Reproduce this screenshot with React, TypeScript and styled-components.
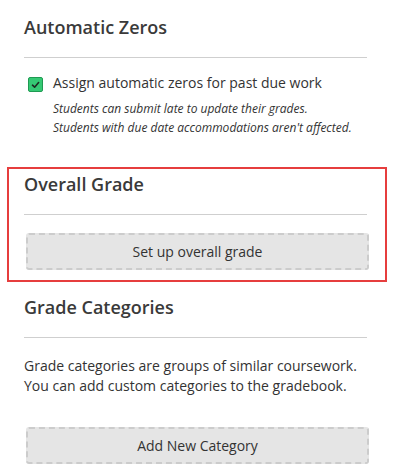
import React from "react";
import styled, { createGlobalStyle } from "styled-components";

const GlobalStyle = createGlobalStyle`
  html, body {
    margin: 0;
    padding: 0;
    background: #ffffff;
  }
  body {
    font-family: "Open Sans", "Noto Sans", Arial, sans-serif;
    color: #333333;
  }
`;

const Page = styled.div`
  width: 343px;
  padding: 15px 0 0 24px;
  display: flex;
  flex-direction: column;
`;

const Section = styled.section<{ $gapAfter?: number }>`
  display: flex;
  flex-direction: column;
  margin-bottom: ${(p) => p.$gapAfter ?? 0}px;
`;

const Highlight = styled.div`
  border: 2px solid #e63e3e;
  margin: 0 -20px 13px -17px;
  padding: 3px 18px 10px 15px;
`;

const Title = styled.h2`
  margin: 0 0 18px;
  font-size: 18px;
  line-height: 24px;
  font-weight: 600;
  color: #3a3a3a;
`;

const Divider = styled.hr<{ $after?: number }>`
  margin: 0 0 ${(p) => p.$after ?? 15}px;
  border: 0;
  border-top: 1px solid #cfcfcf;
  height: 0;
`;

const CheckRow = styled.label`
  display: flex;
  align-items: flex-start;
  gap: 10px;
  padding-left: 4px;
`;

const Box = styled.span`
  flex: none;
  width: 13px;
  height: 13px;
  margin-top: 4px;
  border: 1px solid #1f9a52;
  border-radius: 2px;
  background: #35c974;
  display: flex;
  align-items: center;
  justify-content: center;
`;

const CheckText = styled.div`
  display: flex;
  flex-direction: column;
`;

const Label = styled.span`
  font-size: 14px;
  line-height: 20px;
  color: #333333;
`;

const Hint = styled.p`
  margin: 6px 0 0;
  font-size: 12px;
  line-height: 19px;
  font-style: italic;
  color: #333333;
`;

const Body = styled.p`
  margin: 3px 0 31px;
  font-size: 14px;
  line-height: 20px;
  color: #333333;
`;

const DashedButton = styled.button`
  margin-left: 2px;
  width: 343px;
  height: 37px;
  background: #e5e5e5;
  border: 2px dashed #cccccc;
  border-radius: 3px;
  font-family: "Open Sans", "Noto Sans", Arial, sans-serif;
  font-size: 14px;
  color: #333333;
  cursor: pointer;
`;

export default function App() {
  return (
    <>
      <GlobalStyle />
      <Page>
        <Section $gapAfter={30}>
          <Title>Automatic Zeros</Title>
          <Divider />
          <CheckRow>
            <Box>
              <svg width="9" height="8" viewBox="0 0 9 8">
                <path d="M1.5 4.2 L3.6 6.2 L7.6 1.6" fill="none" stroke="#1d2b22" strokeWidth="1.6" strokeLinecap="round" strokeLinejoin="round" />
              </svg>
            </Box>
            <CheckText>
              <Label>Assign automatic zeros for past due work</Label>
              <Hint>
                Students can submit late to update their grades.
                <br />
                Students with due date accommodations aren't affected.
              </Hint>
            </CheckText>
          </CheckRow>
        </Section>

        <Highlight>
          <Section>
            <Title>Overall Grade</Title>
            <Divider $after={18} />
            <DashedButton>Set up overall grade</DashedButton>
          </Section>
        </Highlight>

        <Section>
          <Title>Grade Categories</Title>
          <Divider />
          <Body>
            Grade categories are groups of similar coursework.
            <br />
            You can add custom categories to the gradebook.
          </Body>
          <DashedButton>Add New Category</DashedButton>
        </Section>
      </Page>
    </>
  );
}
